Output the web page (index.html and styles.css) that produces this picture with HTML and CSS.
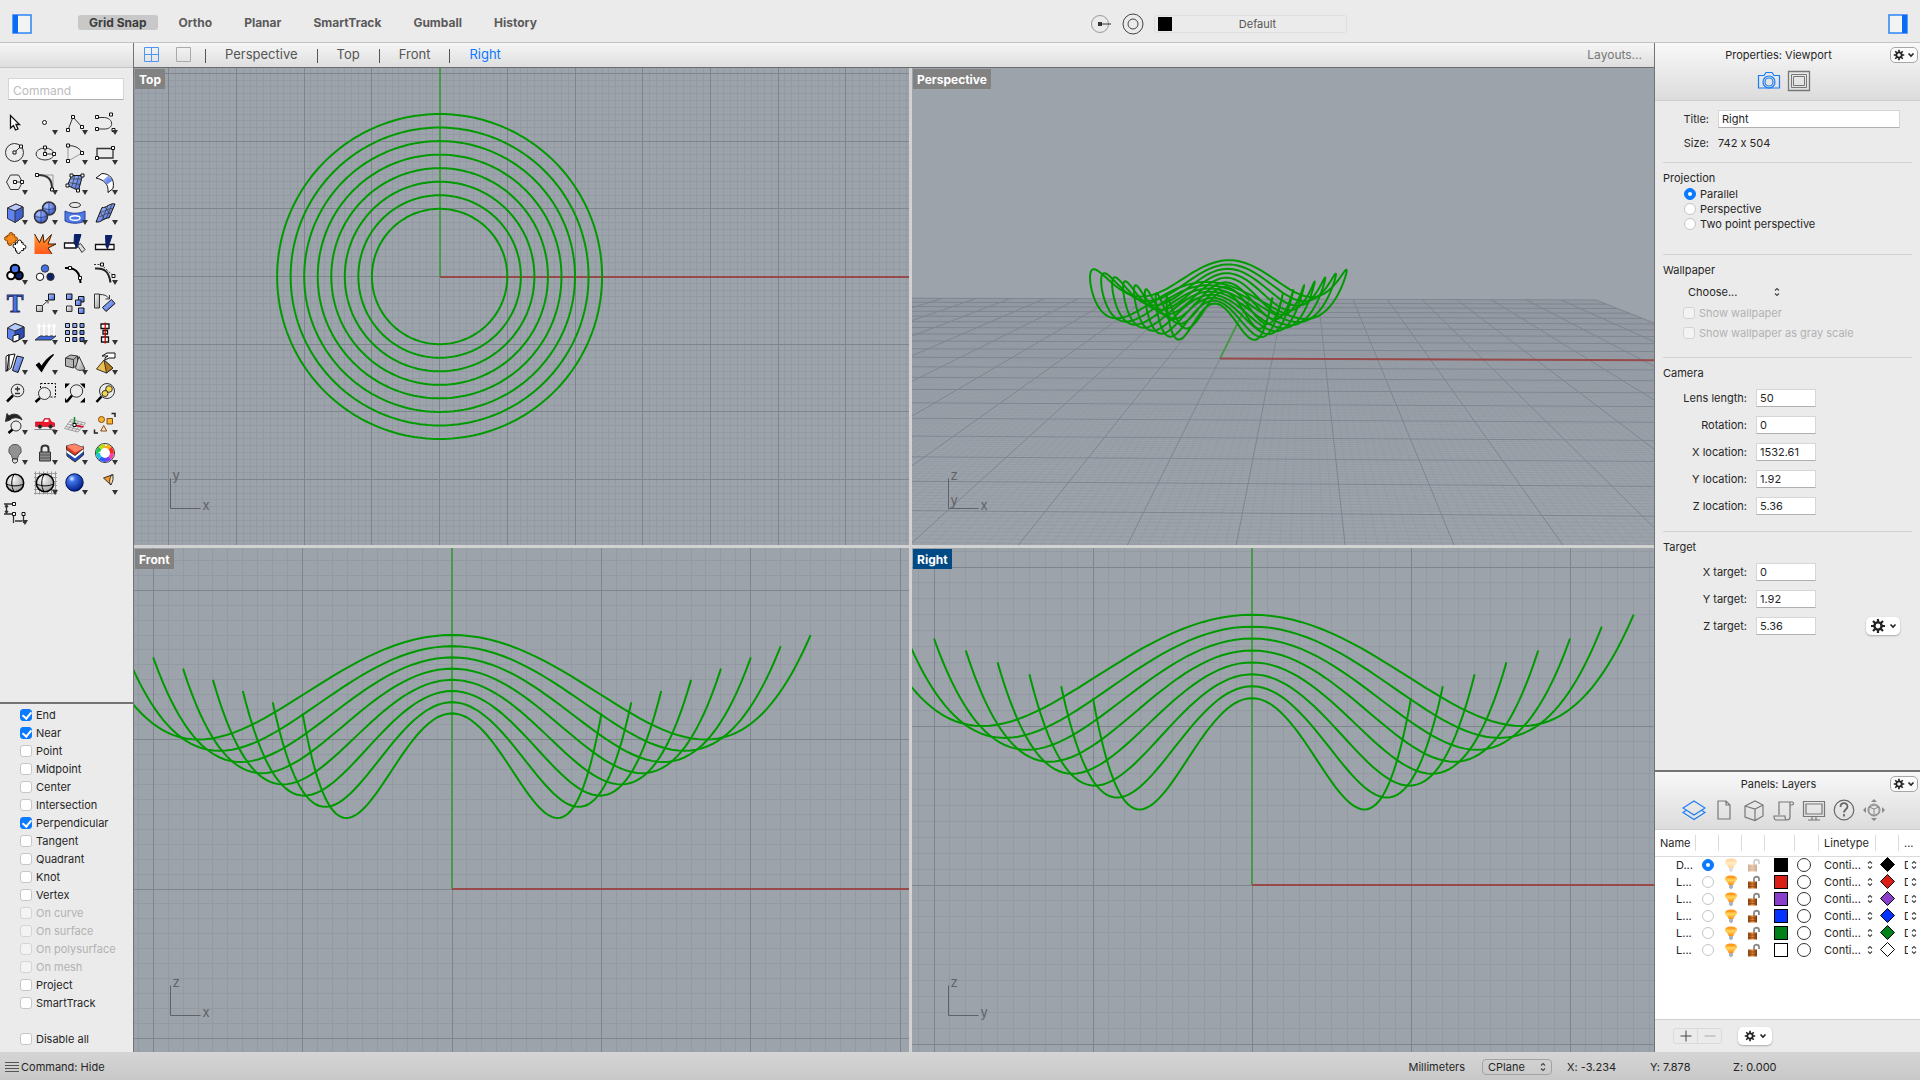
FILE: index.html
```html
<!doctype html>
<html lang="en">
<head>
<meta charset="utf-8">
<title>Rhinoceros</title>
<link rel="stylesheet" href="styles.css">
</head>
<body>

<!-- shared gradients and symbols -->
<svg class="defs" width="0" height="0" aria-hidden="true">
  <defs>
    <linearGradient id="blue" x1="0" y1="0" x2="1" y2="1"><stop offset="0" stop-color="#b4c8ff"/><stop offset="1" stop-color="#3c62d8"/></linearGradient>
    <linearGradient id="grey" x1="0" y1="0" x2="1" y2="1"><stop offset="0" stop-color="#fff"/><stop offset="1" stop-color="#9a9a9a"/></linearGradient>
    <linearGradient id="fire" x1="0" y1="0" x2="0" y2="1"><stop offset="0" stop-color="#ff9a2e"/><stop offset="1" stop-color="#ff5a1c"/></linearGradient>
    <linearGradient id="glow" x1="0" y1="0" x2="0" y2="1"><stop offset="0" stop-color="#ff8a0c"/><stop offset=".5" stop-color="#ffd65c"/><stop offset="1" stop-color="#ff8c12"/></linearGradient>
    <linearGradient id="brass" x1="0" y1="0" x2="1" y2="0"><stop offset="0" stop-color="#8a3f10"/><stop offset=".5" stop-color="#e0862f"/><stop offset="1" stop-color="#7a340c"/></linearGradient>
    <radialGradient id="ball" cx=".35" cy=".3" r=".7"><stop offset="0" stop-color="#fff"/><stop offset="1" stop-color="#a4a4a4"/></radialGradient>
    <radialGradient id="marble" cx=".35" cy=".28" r=".75"><stop offset="0" stop-color="#e6f0ff"/><stop offset=".25" stop-color="#3f74e8"/><stop offset="1" stop-color="#001a84"/></radialGradient>
    <radialGradient id="orb" cx=".35" cy=".3" r=".8"><stop offset="0" stop-color="#a9c0ff"/><stop offset="1" stop-color="#2d52c4"/></radialGradient>
  </defs>
  <symbol id="gear" viewBox="0 0 16 16">
    <circle cx="8" cy="8" r="3.6" fill="none" stroke="#222" stroke-width="2.4"/>
    <path d="M8 1v3M8 12v3M1 8h3M12 8h3M3 3l2 2M11 11l2 2M13 3l-2 2M3 13l2-2" stroke="#222" stroke-width="2.2" fill="none"/>
  </symbol>
  <symbol id="chev" viewBox="0 0 8 8"><path d="M1.500 2.500L4 5l2.500-2.500" fill="none" stroke="#222" stroke-width="1.600"/></symbol>
  <symbol id="updown" viewBox="0 0 6 10"><path d="M1 3.500L3 1.500l2 2M1 6.500l2 2 2-2" fill="none" stroke="#444" stroke-width="1.100"/></symbol>
  <symbol id="bulb" viewBox="0 0 14 16">
    <path d="M7 1.500c4 0 6 1.500 6 3.500 0 2.500-3.500 3-3.500 6h-5c0-3-3.500-3.500-3.500-6C1 3 3 1.500 7 1.500z" fill="url(#glow)"/>
    <path d="M3 3.500h8" stroke="#ff9b20"/><path d="M5 11h4v2.500L7 15.500 5 13.500z" fill="#a9b2bf"/>
  </symbol>
  <symbol id="lock" viewBox="0 0 14 16">
    <path d="M7 8V5c0-3 5-3 5 0v2" fill="none" stroke="#8a8a8a" stroke-width="1.800"/>
    <rect x="1" y="7.500" width="9" height="7" fill="url(#brass)"/><path d="M1 10h9M1 12.500h9" stroke="#7b3a12" stroke-width=".6"/>
  </symbol>
</svg>

<div class="app">

<header class="topbar">
  <button class="side-toggle" aria-label="Left sidebar"><svg width="20" height="24" viewBox="0 0 20 24"><rect x="1" y="3" width="18" height="18" fill="#f3f3f3" stroke="#2b84f5" stroke-width="1.500"/><path d="M1 3h5v18H1z" fill="#0a6cf5"/></svg></button>
  <nav class="modes">
    <button class="on">Grid Snap</button><button>Ortho</button><button>Planar</button><button>SmartTrack</button><button>Gumball</button><button>History</button>
  </nav>
  <div class="current">
    <button class="round" aria-label="Record history"><svg width="22" height="22" viewBox="0 0 22 22"><circle cx="10" cy="11" r="8.500" fill="none" stroke="#999"/><path d="M8 9h4v4H8z" fill="#333"/><path d="M11 11h10" stroke="#333"/></svg></button>
    <button class="round" aria-label="Filter"><svg width="22" height="22" viewBox="0 0 22 22"><circle cx="11" cy="11" r="10" fill="none" stroke="#444"/><circle cx="11" cy="11" r="5" fill="none" stroke="#444"/></svg></button>
    <button class="layer-pick"><i></i><span>Default</span></button>
  </div>
  <button class="side-toggle" aria-label="Right sidebar"><svg width="20" height="24" viewBox="0 0 20 24"><rect x="1" y="3" width="18" height="18" fill="#f3f3f3" stroke="#2b84f5" stroke-width="1.500"/><path d="M14 3h5v18h-5z" fill="#0a6cf5"/></svg></button>
</header>

<aside class="left">
  <div class="strip"></div>
  <div class="command"><input type="text" placeholder="Command" aria-label="Command"></div>

  <div class="tools">
    <button class="tool" aria-label="Select"><svg viewBox="0 0 30 30"><path class="w" d="M10.500 8.500v12.500l3-2.500 2 4.500 2.500-1-2-4.500h3.500z" stroke-width="1.300"/></svg></button>
    <button class="tool menu" aria-label="Point"><svg viewBox="0 0 30 30"><circle class="w" cx="14.500" cy="15.500" r="2"/></svg></button>
    <button class="tool menu" aria-label="Polyline"><svg viewBox="0 0 30 30"><path d="M8 23l5-13 9 10"/><path class="n" d="M6.500 21.500h3v3h-3zM11.500 8.500h3v3h-3zM20.500 18.500h3v3h-3z"/></svg></button>
    <button class="tool menu" aria-label="Curve"><svg viewBox="0 0 30 30"><path d="M8 10.500h4c12-1 13 12 2 11.500H8"/><path class="n" d="M5.500 8.500h3v3h-3zM19.500 6h3v3h-3zM5.500 20.500h3v3h-3zM22 21.500h3v3h-3z"/></svg></button>

    <button class="tool menu" aria-label="Circle"><svg viewBox="0 0 30 30"><circle cx="14.500" cy="15.500" r="9"/><path d="M14.500 15.500l6-6"/><path class="n" d="M13 14h3v3h-3zM19.500 8h3v3h-3z"/></svg></button>
    <button class="tool menu" aria-label="Ellipse"><svg viewBox="0 0 30 30"><ellipse cx="15" cy="17" rx="9" ry="6"/><path d="M15 17V10M15 17h9"/><path class="n" d="M13.500 15.500h3v3h-3zM13.500 9h3v3h-3zM22.500 15.500h3v3h-3z"/></svg></button>
    <button class="tool menu" aria-label="Arc"><svg viewBox="0 0 30 30"><path d="M8 24V8M8 24l14-8" stroke="#999"/><path d="M8 8.500q11 0 14 7.500"/><path class="n" d="M6.500 7h3v3h-3zM6.500 22.500h3v3h-3zM20.500 14.500h3v3h-3z"/></svg></button>
    <button class="tool menu" aria-label="Rectangle"><svg viewBox="0 0 30 30"><path d="M7 11.500h16v9.500H7z" stroke-width="1.300"/><path class="n" d="M5.500 19.500h3v3h-3zM21.500 9.500h3v3h-3z"/></svg></button>

    <button class="tool menu" aria-label="Polygon"><svg viewBox="0 0 30 30"><path d="M10.500 8h8l4 7-4 7.500h-8l-4-7.500z"/><path d="M15 15h7"/><path class="n" d="M13.500 13.500h3v3h-3zM20.500 13.500h3v3h-3z"/></svg></button>
    <button class="tool menu" aria-label="Fillet"><svg viewBox="0 0 30 30"><path d="M8 8h15v15" stroke="#999"/><path d="M8 8c10 0 14 4 14 14" stroke-width="2"/><path class="n" d="M5.500 6.500h3v3h-3zM20.500 21h3v3h-3z"/></svg></button>
    <button class="tool menu" aria-label="Surface from points"><svg viewBox="0 0 30 30"><path class="b" d="M11.500 8.500h11l-4 15-11-5z"/><path d="M15 8.500l-3.500 12M19 8.500l-4 13.500M10 12h11.500M9 15.500l11 2" stroke-width=".7"/><path class="n" d="M10 7h3v3h-3zM21 7h3v3h-3zM6 17h3v3H6zM16.500 22h3v3h-3z"/></svg></button>
    <button class="tool menu" aria-label="Sweep"><svg viewBox="0 0 30 30"><path class="w" d="M6 11l6-4.500c8 0 13 6 11 15l-5 4c1-9-5-13-12-14.500z"/><path fill="url(#blue)" d="M13 13l5.500-4.500 4 5-5.500 4z" stroke="none"/></svg></button>

    <button class="tool menu" aria-label="Box"><svg viewBox="0 0 30 30"><path d="M7.500 11L16 7l7 3v10l-8 5.500-7.500-4z" fill="#5f84f2"/><path d="M7.500 11L16 7l7 3-8 4z" fill="#b9caff"/><path d="M15 14v11.500l8-5.500V10z" fill="#3f62cf"/></svg></button>
    <button class="tool menu" aria-label="Boolean union"><svg viewBox="0 0 30 30"><circle cx="19" cy="11.500" r="6.500" fill="url(#orb)" stroke-width="1.500"/><circle cx="11" cy="19.500" r="6.500" fill="url(#orb)" stroke-width="1.500"/><path d="M11 13v13M5 19c4 2 8 2 12 0M19 5v13M13 11c4 2 8 2 12 0" stroke="#1e2f70" stroke-width=".7"/></svg></button>
    <button class="tool menu" aria-label="Project"><svg viewBox="0 0 30 30"><ellipse cx="15" cy="8" rx="5.500" ry="2.500"/><path d="M5 14c6 3 14 3 20 0v10c-6 3-14 3-20 0z" fill="#4f78e6" stroke="#28439a"/><ellipse cx="15" cy="21" rx="5" ry="2.300" stroke="#fff" stroke-width="1.500"/></svg></button>
    <button class="tool menu" aria-label="Mesh"><svg viewBox="0 0 30 30"><path class="b" d="M12 10.500c4 1 8-5 13-3.500l-6 14c-4-1-8 5-13 4z"/><path d="M18 8.500l-6 14.500M22 7l-6 15M10 15c4 1 8-5 13-3M8 19.500c4 1 8-5 13-3M10 15l5 8M15 10l6 8" stroke-width=".7"/></svg></button>

    <button class="tool" aria-label="Join"><svg viewBox="0 0 30 30"><g fill="#f58a1f" stroke="#8a4300"><circle cx="11" cy="7.500" r="2"/><circle cx="6.500" cy="11.500" r="2"/><circle cx="15.500" cy="12" r="2"/><circle cx="10" cy="16.500" r="2"/><path d="M7 8.500l7.500-1 1 8-8 1z"/></g><path d="M9.500 7.500h3v9h-4zM6.500 10.500h9v3h-9z" fill="#f58a1f" stroke="none"/><g class="w"><circle cx="19.500" cy="15" r="2"/><circle cx="15" cy="19" r="2"/><circle cx="24" cy="20" r="2"/><circle cx="18.500" cy="24.500" r="2"/><path d="M15.500 16l7.500-.500.500 8-8 .500z"/></g><path d="M18 15h3v9.500h-4zM15 18h9v3h-9z" fill="#fff" stroke="none"/></svg></button>
    <button class="tool" aria-label="Explode"><svg viewBox="0 0 30 30"><path d="M4.500 27V7l5 8.500L13 7.500l1 8 7.500-8-3.500 9.500h8l-8 4 4 6z" fill="url(#fire)" stroke="none"/><path d="M4.500 7l5 8.500L13 7.500l1 8 7.500-8-3.500 9.500h8l-8 4 4 6" stroke="#3a1800"/></svg></button>
    <button class="tool" aria-label="Trim"><svg viewBox="0 0 30 30"><path class="w" d="M4.500 16H16v5H4.500z" stroke-width="1.300"/><path d="M17.500 18.500l3-2 4.500 6-3 3z" fill="#ddd"/><path d="M14.500 7.500H21L17 21l-3-5z" fill="#0c2266" stroke="#0c2266"/></svg></button>
    <button class="tool" aria-label="Split"><svg viewBox="0 0 30 30"><path class="w" d="M5.500 17.500H24v5H5.500z" stroke-width="1.300"/><path d="M15.500 8.500H22L17.500 22l-1.500-3z" fill="#0c2266" stroke="#0c2266"/></svg></button>

    <button class="tool menu" aria-label="Group"><svg viewBox="0 0 30 30"><g stroke="#000" stroke-width="2"><circle cx="11" cy="18.500" r="3.800" fill="#fff"/><circle cx="19" cy="18.500" r="3.800" fill="#0c2266"/><circle cx="15" cy="12" r="4.300" fill="#4570e6"/></g></svg></button>
    <button class="tool" aria-label="Ungroup"><svg viewBox="0 0 30 30"><circle cx="15" cy="11.500" r="3.700" fill="#4570e6"/><circle class="w" cx="10" cy="19.800" r="3.700"/><circle cx="20.500" cy="19.800" r="3.700" fill="#0c2266"/></svg></button>
    <button class="tool" aria-label="Edit points"><svg viewBox="0 0 30 30"><path d="M5 11c10-1 15 4 15.500 15" stroke-width="2" stroke="#000"/><path class="n" d="M8.500 9.500h3v3h-3zM18.500 19.500h3v3h-3z"/></svg></button>
    <button class="tool menu" aria-label="Control points"><svg viewBox="0 0 30 30"><path d="M5 11.500c10-1 14 4 15.500 14" stroke-width="2" stroke="#222"/><path d="M4 7.500h7l12 11" stroke-dasharray="2 1.500"/><path class="n" d="M10.500 6h3v3h-3zM22 17.500h3v3h-3z"/></svg></button>

    <button class="tool" aria-label="Text"><svg viewBox="0 0 30 30"><text x="15" y="24.500" text-anchor="middle" font-family="Liberation Serif, serif" font-weight="700" font-size="25" fill="#4a74e0" stroke="#1c2f6c" stroke-width=".9">T</text></svg></button>
    <button class="tool menu" aria-label="Move"><svg viewBox="0 0 30 30"><path d="M6.500 18.500h6v6h-6z" fill="url(#grey)"/><path class="b" d="M18.500 7h6v6h-6z"/><path d="M13 18l4.500-4M15 13.500h3v3"/></svg></button>
    <button class="tool" aria-label="Copy"><svg viewBox="0 0 30 30"><path class="b" d="M6.500 7h5.500v5.500H6.500z"/><path class="b" d="M18.500 9.500H24V15h-5.500z"/><path class="b" d="M15.500 13H21v5.500h-5.500z"/><path class="b" d="M18.500 21H24v5.500h-5.500z"/><path d="M6.500 19H12v5.500H6.500z" fill="url(#grey)"/></svg></button>
    <button class="tool" aria-label="Rotate"><svg viewBox="0 0 30 30"><path d="M4.500 7H9.500v14h-5z" fill="url(#grey)"/><path class="b" d="M12.500 20.500l9-8 3.500 4-9 8z"/><path d="M10 7.500c4 0 7 1 9 4M19.500 8v4h-4"/></svg></button>

    <button class="tool menu" aria-label="Extract surface"><svg viewBox="0 0 30 30"><path d="M7.500 11L15 6.500l9 3.500v10l-9 5-7.500-4z" fill="#5f84f2"/><path d="M7.500 11L15 6.500l9 3.500-9 4z" fill="#b9caff"/><path d="M15 14v11l9-5V10z" fill="#2b4cb8"/><path class="w" d="M13 19l6-2v6l-6 2z"/></svg></button>
    <button class="tool menu" aria-label="Extrude"><svg viewBox="0 0 30 30"><path d="M5 23l5-4h16l-5 4z" fill="#3a67dc"/><path d="M9 19V8M14 19V8M19 19V8M24 19V8M7.500 10L9 7.500l1.500 2.500M12.500 10L14 7.500l1.500 2.500M17.500 10L19 7.500l1.500 2.500M22.500 10L24 7.500l1.500 2.500" stroke="#fff" stroke-width="1.500"/></svg></button>
    <button class="tool menu" aria-label="Array"><svg viewBox="0 0 30 30"><path class="b" d="M5.500 6.500h4v4h-4zM12.800 6.500h4v4h-4zM20 6.500h4v4h-4zM5.500 13.500h4v4h-4zM12.800 13.500h4v4h-4zM20 13.500h4v4h-4zM12.800 20.500h4v4h-4zM20 20.500h4v4h-4z"/><path class="w" d="M5.500 20.500h4v4h-4z"/></svg></button>
    <button class="tool menu" aria-label="Align"><svg viewBox="0 0 30 30"><path class="w" d="M11 7h8v4.500h-8zM13 13.500h4.500V17H13zM11.500 20h7v5h-7z" stroke-width="1.300"/><path d="M15.200 5.500v21" stroke="#d40000" stroke-width="1.300"/></svg></button>

    <button class="tool menu" aria-label="Dimension"><svg viewBox="0 0 30 30"><path class="w" d="M6 9.500l3-2v13l-3 4zM9 8l6-1-4 14-4 3z"/><path class="b" d="M17 9l6.500 1.500L18 25.500l-5.500-2z"/></svg></button>
    <button class="tool menu" aria-label="Check"><svg viewBox="0 0 30 30"><path d="M6.500 18l2.500-2 2.500 3.500C15 14 19 10 23.500 7.500 19 12 15 18 11.500 24.500z" fill="#000" stroke="#000" stroke-width="1.200"/></svg></button>
    <button class="tool menu" aria-label="Solids"><svg viewBox="0 0 30 30"><path d="M5.500 11l5-3 7 1v8l-4 4-8-2z" fill="#b5b5b5"/><path d="M5.500 11l8 1.500v8.500M13.500 12.500l4-3.500" /><path d="M19 9.500L25 22c-2 2-8 2-9.500-1z" fill="url(#grey)"/></svg></button>
    <button class="tool menu" aria-label="Visibility"><svg viewBox="0 0 30 30"><path d="M14 13L6.500 22l10 4 6.500-5z" fill="#efc04e"/><path d="M14 13l2.500 13 6.500-5z" fill="#b97c1c"/><path class="w" d="M12 9l5-3h8v5h-6l-4 2v-2l3-2z"/></svg></button>

    <button class="tool" aria-label="Zoom dynamic"><svg viewBox="0 0 30 30"><circle cx="17.500" cy="13.500" r="6.300"/><path d="M17.500 9.500v5M15 12h5M15 16.500h5" stroke-width="1.300"/><path d="M13 18.500L7 24.500" stroke-width="2.500" stroke="#000"/></svg></button>
    <button class="tool" aria-label="Zoom window"><svg viewBox="0 0 30 30"><path d="M10.500 6.500h15v13.500h-15z" stroke-dasharray="2 1.500" stroke="#000"/><circle cx="14.500" cy="16.500" r="6" fill="#ececec"/><path d="M10 21l-4.500 4" stroke-width="2.500" stroke="#000"/></svg></button>
    <button class="tool" aria-label="Zoom extents"><svg viewBox="0 0 30 30"><path d="M5 6.500h5l-5 5zM25 6.500h-5l5 5zM25 25.500h-5l5-5zM5 25.500h3l-3-5z" fill="#000" stroke="none"/><circle cx="16.500" cy="14" r="6.200"/><path d="M12 18.500l-5 6" stroke-width="2.500" stroke="#000"/></svg></button>
    <button class="tool" aria-label="Zoom selected"><svg viewBox="0 0 30 30"><circle cx="17" cy="14" r="7.500"/><circle cx="19" cy="12" r="3.300" fill="#f6d94b"/><circle cx="15" cy="16.500" r="3" fill="#f6d94b"/><path d="M11.500 19.500L6.500 25" stroke-width="2.500" stroke="#000"/></svg></button>

    <button class="tool menu" aria-label="Undo view"><svg viewBox="0 0 30 30"><path d="M10 13c3-3 8-3 12 0-1-5-8-8-13-4L7 6.500 5.500 14.500z" fill="#222"/><circle cx="16" cy="19" r="5"/><path d="M12.500 22.500L8.500 26" stroke-width="2.500" stroke="#000"/></svg></button>
    <button class="tool menu" aria-label="Set view"><svg viewBox="0 0 30 30"><path d="M4.500 22.500h21" stroke="#888"/><path d="M5.500 15h7l2-3.500h5l2 3.500 3 1v3.500h-19z" fill="#f0182b" stroke="#b00015" stroke-width=".6"/><path d="M15 12.500h3.500V15H14z" fill="#fff" stroke="none"/><circle cx="10" cy="19.500" r="1.700" fill="#222"/><circle cx="20.500" cy="19.500" r="1.700" fill="#222"/></svg></button>
    <button class="tool menu" aria-label="CPlane"><svg viewBox="0 0 30 30"><path d="M4.500 21.500l6.500-9 14.500 3.500-7.500 9zM9.500 14.500l14 3.500M7.500 17l14 3.500M6 19.500l14 3.500M8 22.500l6.500-9M11.500 23.500l7-9M15 24.500l7-9" stroke="#8c8c8c" stroke-width=".8"/><path d="M14.500 18V10" stroke="#0a8a28" stroke-width="1.500"/><path d="M14.500 18l9 2" stroke="#e00020" stroke-width="1.500"/><path class="n" d="M13 16.500h3v3h-3z"/></svg></button>
    <button class="tool menu" aria-label="Select objects"><svg viewBox="0 0 30 30"><g fill="#f5b62e" stroke="#8a4a10"><circle cx="11.500" cy="12.500" r="3"/><path d="M17 11.500h5.500V17H17z"/><path d="M13.700 18.500l3 5.500h-6z" fill="#fbe3d2"/></g><path d="M21.500 6.500h3.500v3.500M4.500 22.500V26H8" stroke="#222" stroke-width="1.500"/></svg></button>

    <button class="tool menu" aria-label="Hide"><svg viewBox="0 0 30 30"><path d="M15 7.500a6 6 0 0 1 3.500 11l-1 3h-5l-1-3A6 6 0 0 1 15 7.500z" fill="#929292" stroke="#555"/><path d="M12.500 22h5v2.500l-1.500 1.500h-2l-1.500-1.500z" fill="#ddd"/></svg></button>
    <button class="tool menu" aria-label="Lock"><svg viewBox="0 0 30 30"><path d="M11.500 15v-3.500c0-4 7-4 7 0V15" stroke-width="2"/><path d="M9.500 15h11v9h-11z" fill="#8a8a8a"/><path d="M10 18h10M10 21h10" stroke="#555"/></svg></button>
    <button class="tool menu" aria-label="Layers"><svg viewBox="0 0 30 30"><path d="M6.500 9l8.500 7 8.500-7v9L15 25l-8-6z" fill="#1c48b8"/><path d="M6.500 9l8.500 7 8.500-7v5.500L15 21.500l-8.500-6z" fill="#fff" stroke="none"/><path d="M6.500 9l8-2 9.500 4-9 7.500-8.500-6z" fill="#e8351f"/><path d="M6.500 9l8-2 9.500 4-9 4.500z" fill="#ff8468" stroke="none"/></svg></button>
    <button class="tool menu" aria-label="Colour"><svg viewBox="0 0 30 30"><circle cx="15" cy="16" r="9.500" fill="#fff" stroke="#333"/><g fill="none" stroke-width="4"><circle cx="15" cy="16" r="7" pathLength="8" stroke-dasharray="1 7" stroke="#ff3ca0"/><circle cx="15" cy="16" r="7" pathLength="8" stroke-dasharray="1 7" stroke-dashoffset="-1" stroke="#7b3cff"/><circle cx="15" cy="16" r="7" pathLength="8" stroke-dasharray="1 7" stroke-dashoffset="-2" stroke="#2060ff"/><circle cx="15" cy="16" r="7" pathLength="8" stroke-dasharray="1 7" stroke-dashoffset="-3" stroke="#12c8e0"/><circle cx="15" cy="16" r="7" pathLength="8" stroke-dasharray="1 7" stroke-dashoffset="-4" stroke="#18c850"/><circle cx="15" cy="16" r="7" pathLength="8" stroke-dasharray="1 7" stroke-dashoffset="-5" stroke="#b4e010"/><circle cx="15" cy="16" r="7" pathLength="8" stroke-dasharray="1 7" stroke-dashoffset="-6" stroke="#ffb010"/><circle cx="15" cy="16" r="7" pathLength="8" stroke-dasharray="1 7" stroke-dashoffset="-7" stroke="#f03020"/></g></svg></button>

    <button class="tool" aria-label="Shade"><svg viewBox="0 0 30 30"><circle cx="15" cy="16" r="8.700" fill="url(#ball)" stroke="#000" stroke-width="1.500"/><path d="M14 7.500c-3 5-3 12 0 17M6.500 17c5 2.500 12 2.500 17 0" stroke="#000"/></svg></button>
    <button class="tool menu" aria-label="Shaded viewport"><svg viewBox="0 0 30 30"><path d="M5.500 4.500v23M9.500 4.500v23M13.500 4.500v23M17.500 4.500v23M21.500 4.500v23M25.500 4.500v23M4 6.500h23M4 10.500h23M4 14.500h23M4 18.500h23M4 22.500h23M4 26.500h23" stroke="#999"/><circle cx="15" cy="16" r="8.700" fill="url(#ball)" stroke="#000" stroke-width="1.500"/><path d="M14 7.500c-3 5-3 12 0 17M6.500 17c5 2.500 12 2.500 17 0" stroke="#000"/></svg></button>
    <button class="tool menu" aria-label="Render"><svg viewBox="0 0 30 30"><circle cx="14.500" cy="15.500" r="8.700" fill="url(#marble)" stroke="#001058"/></svg></button>
    <button class="tool menu" aria-label="Spotlight"><svg viewBox="0 0 30 30"><path d="M13.500 11L23 7.500l-2 10.500z" fill="#f79a2b"/><path d="M22 7.500c2 2 1 8-1.500 10.500-1.500-3-1-7 1.500-10.500z" fill="#ffe2b0"/></svg></button>

    <button class="tool menu" aria-label="Dimensions"><svg viewBox="0 0 30 30"><path d="M4 7h8M4 17h8M6.500 8.500v7M5 10l1.500-2L8 10M5 14l1.500 2L8 14M13.500 19v7M23.500 19v7M15 24h7" stroke-width="1.300"/><path class="n" d="M12.500 5.500h3v3h-3zM12.500 15.500h3v3h-3zM22 15.500h3v3h-3z"/></svg></button>
  </div>

  <div class="osnaps">
    <label><input type="checkbox" checked>End</label>
    <label><input type="checkbox" checked>Near</label>
    <label><input type="checkbox">Point</label>
    <label><input type="checkbox">Midpoint</label>
    <label><input type="checkbox">Center</label>
    <label><input type="checkbox">Intersection</label>
    <label><input type="checkbox" checked>Perpendicular</label>
    <label><input type="checkbox">Tangent</label>
    <label><input type="checkbox">Quadrant</label>
    <label><input type="checkbox">Knot</label>
    <label><input type="checkbox">Vertex</label>
    <label class="off"><input type="checkbox" disabled>On curve</label>
    <label class="off"><input type="checkbox" disabled>On surface</label>
    <label class="off"><input type="checkbox" disabled>On polysurface</label>
    <label class="off"><input type="checkbox" disabled>On mesh</label>
    <label><input type="checkbox">Project</label>
    <label><input type="checkbox">SmartTrack</label>
    <label class="all"><input type="checkbox">Disable all</label>
  </div>
</aside>

<main class="center">
  <nav class="tabs">
    <button class="lay" aria-label="Four views"><svg width="16" height="16" viewBox="0 0 16 16"><path d="M.5.5h14v14H.5zM7.500.5v14M.5 7.500h14" fill="none" stroke="#4c96f5"/></svg></button>
    <button class="lay" aria-label="Single view"><svg width="16" height="16" viewBox="0 0 16 16"><path d="M.5.5h14v14H.5z" fill="none" stroke="#aaa"/></svg></button>
    <a href="#persp">Perspective</a><a href="#top">Top</a><a href="#front">Front</a><a href="#right" class="on">Right</a>
    <button class="layouts">Layouts...</button>
  </nav>
  <div class="views">
    <section class="view" id="top"><h2>Top</h2><svg></svg></section>
    <section class="view" id="persp"><h2>Perspective</h2><svg></svg></section>
    <section class="view" id="front"><h2>Front</h2><svg></svg></section>
    <section class="view active" id="right"><h2>Right</h2><svg></svg></section>
  </div>
</main>

<aside class="right">
  <section class="props">
    <div class="panel-head">
      <h3>Properties: Viewport</h3>
      <button class="gear flat" aria-label="Panel options"><svg width="12" height="12"><use href="#gear"/></svg><svg width="8" height="8"><use href="#chev"/></svg></button>
      <div class="panel-icons">
        <button aria-label="Camera"><svg width="24" height="24" viewBox="0 0 24 24" fill="none" stroke="#1a7cf5" stroke-width="1.200"><path d="M1.500 6.500h5.500l2-3h6l2 3h5.500V19h-21z"/><circle cx="12" cy="13" r="6"/><circle cx="12" cy="13" r="4"/></svg></button>
        <button aria-label="Viewport"><svg width="24" height="24" viewBox="0 0 24 24" fill="none" stroke="#777"><path d="M1.500 2.500h21v19h-21z" stroke-width="1.300"/><path d="M4.500 5.500h15v13h-15zM6.500 7.500h11v9h-11z"/></svg></button>
      </div>
    </div>

    <div class="group title">
      <div class="line"><label for="vt">Title:</label><input type="text" id="vt" value="Right"></div>
      <div class="line"><span class="lbl">Size:</span><span>742 x 504</span></div>
    </div>

    <div class="group projection">
      <h4>Projection</h4>
      <label><input type="radio" name="proj" checked>Parallel</label>
      <label><input type="radio" name="proj">Perspective</label>
      <label><input type="radio" name="proj">Two point perspective</label>
    </div>

    <div class="group wallpaper">
      <h4>Wallpaper</h4>
      <div class="pick"><select aria-label="Wallpaper"><option>Choose...</option></select><svg width="6" height="10"><use href="#updown"/></svg></div>
      <label class="off"><input type="checkbox" disabled>Show wallpaper</label>
      <label class="off"><input type="checkbox" disabled>Show wallpaper as gray scale</label>
    </div>

    <div class="group nums">
      <h4>Camera</h4>
      <div class="line"><label for="c1">Lens length:</label><input type="text" id="c1" value="50"></div>
      <div class="line"><label for="c2">Rotation:</label><input type="text" id="c2" value="0"></div>
      <div class="line"><label for="c3">X location:</label><input type="text" id="c3" value="1532.61"></div>
      <div class="line"><label for="c4">Y location:</label><input type="text" id="c4" value="1.92"></div>
      <div class="line"><label for="c5">Z location:</label><input type="text" id="c5" value="5.36"></div>
    </div>

    <div class="group nums">
      <h4>Target</h4>
      <div class="line"><label for="t1">X target:</label><input type="text" id="t1" value="0"></div>
      <div class="line"><label for="t2">Y target:</label><input type="text" id="t2" value="1.92"></div>
      <div class="line"><label for="t3">Z target:</label><input type="text" id="t3" value="5.36"><button class="gear solid" aria-label="Target options"><svg width="16" height="16"><use href="#gear"/></svg><svg width="8" height="8"><use href="#chev"/></svg></button></div>
    </div>
  </section>

  <section class="layers">
    <div class="panel-head">
      <h3>Panels: Layers</h3>
      <button class="gear flat" aria-label="Panel options"><svg width="12" height="12"><use href="#gear"/></svg><svg width="8" height="8"><use href="#chev"/></svg></button>
      <div class="panel-icons">
        <button aria-label="Layers"><svg width="24" height="24" viewBox="0 0 24 24" fill="none" stroke="#1a7cf5" stroke-width="1.200"><path d="M12 3l11 7-11 7-11-7z"/><path d="M4 12.500l-3 2 11 7 11-7-3-2"/></svg></button>
        <button aria-label="Pages"><svg width="24" height="24" viewBox="0 0 24 24" fill="none" stroke="#777" stroke-width="1.200"><path d="M6 3h8l4 4v14H6zM14 3v4h4"/></svg></button>
        <button aria-label="Blocks"><svg width="24" height="24" viewBox="0 0 24 24" fill="none" stroke="#777" stroke-width="1.200"><path d="M3 8l10-5 8 4v11l-8 4.500L3 19zM3 8l10 3 8-4M13 11v11"/></svg></button>
        <button aria-label="Notes"><svg width="24" height="24" viewBox="0 0 24 24" fill="none" stroke="#777" stroke-width="1.200"><path d="M7 17V4h13c2 0 2 3 0 3h-2v12c0 2-1 3-3 3H4c-2 0-2-4-2-4h11c0 3 1 4 2 4M18 7V4"/></svg></button>
        <button aria-label="Display"><svg width="24" height="24" viewBox="0 0 24 24" fill="none" stroke="#777" stroke-width="1.200"><path d="M1.500 3.500h21v15h-21zM4 6h16v10H4zM10 18.500v3M14 18.500v3M6 22h12"/></svg></button>
        <button aria-label="Help"><svg width="24" height="24" viewBox="0 0 24 24" fill="none" stroke="#666" stroke-width="1.200"><circle cx="12" cy="12" r="9.800"/><path d="M8.500 9c0-5 7-5 7-.5 0 3-3.500 3-3.500 6M12 16v2.500" stroke-width="1.800"/></svg></button>
        <button aria-label="Rotate"><svg width="24" height="24" viewBox="0 0 24 24" fill="none" stroke="#888"><path d="M7 9l5-2 5 2v6l-5 2.500L7 15zM7 9l5 2 5-2M12 11v6.500"/><circle cx="12" cy="12" r="6"/><path d="M12 1l3 3H9zM12 23l3-3H9zM1 12l3-3v6zM23 12l-3-3v6z" fill="#888" stroke="none"/></svg></button>
      </div>
    </div>

    <div class="table-wrap">
      <table>
        <colgroup><col class="c-name"><col class="c-s"><col class="c-s"><col class="c-s"><col class="c-col"><col class="c-mat"><col class="c-line"><col class="c-s"><col class="c-end"></colgroup>
        <thead><tr><th>Name</th><th></th><th></th><th></th><th></th><th></th><th>Linetype</th><th></th><th>...</th></tr></thead>
        <tbody id="layer-rows"></tbody>
      </table>
    </div>

    <div class="layer-foot">
      <div class="pm"><button aria-label="Add"><svg width="12" height="12" viewBox="0 0 12 12"><path d="M6 .5v11M.5 6h11" stroke="#444"/></svg></button><button aria-label="Remove"><svg width="12" height="12" viewBox="0 0 12 12"><path d="M.5 6h11" stroke="#aaa"/></svg></button></div>
      <button class="gear solid" aria-label="Layer options"><svg width="12" height="12"><use href="#gear"/></svg><svg width="8" height="8"><use href="#chev"/></svg></button>
    </div>
  </section>
</aside>

<footer class="status">
  <svg width="14" height="12" viewBox="0 0 14 12"><path d="M0 1.500h14M0 4.500h14M0 7.500h14M0 10.500h14" stroke="#555"/></svg>
  <span class="cmd">Command: Hide</span>
  <span class="units">Millimeters</span>
  <div class="pick cplane"><select aria-label="Coordinates"><option>CPlane</option></select><svg width="6" height="10"><use href="#updown"/></svg></div>
  <span class="xyz">X: -3.234</span><span class="xyz">Y: 7.878</span><span class="xyz">Z: 0.000</span>
</footer>

</div>
<script src="script.js"></script>
</body>
</html>
```

FILE: styles.css
```css
* {
    box-sizing: border-box;
}
body {
    margin: 0;
    font-family: Inter, "Helvetica Neue", "Liberation Sans", sans-serif;
    font-size: 11px;
    line-height: 14px;
    font-feature-settings: "calt" 0;
    color: #262626;
    background: #ebebeb;
}
h2, h3, h4 {
    margin: 0;
    font-size: 11px;
    font-weight: 400;
}
button, input, select {
    margin: 0;
    padding: 0;
    border: 0;
    background: none;
    font: inherit;
    color: inherit;
    appearance: none;
}
svg {
    display: block;
    flex: none;
}
.defs {
    position: absolute;
}

.app {
    display: grid;
    grid-template-columns: 134px minmax(0, 1fr) 266px;
    grid-template-rows: 43px minmax(0, 1fr) 28px;
    height: 100vh;
    min-height: 1020px;
}

/* top bar */
.topbar {
    grid-column: 1 / -1;
    display: flex;
    align-items: center;
    padding: 5px 12px 0;
    background: #ebebeb;
    border-bottom: 1px solid #c4c4c4;
}
.modes {
    display: flex;
    gap: 10px;
    margin: 0 auto 2px 46px;
}
.modes button {
    height: 15px;
    padding: 0 11px;
    border-radius: 3px;
    font-size: 12px;
    font-weight: 700;
    color: #5a5a5a;
}
.modes .on {
    background: #c8c8c8;
    color: #3c3c3c;
}
.current {
    display: flex;
    align-items: center;
    gap: 10px;
    margin-right: 541px;
}
.layer-pick {
    display: flex;
    align-items: center;
    width: 193px;
    height: 18px;
    padding: 0 3px;
    border: 1px solid #dedede;
    border-radius: 3px;
    color: #555;
}
.layer-pick i {
    width: 14px;
    height: 14px;
    background: #000;
}
.layer-pick span {
    flex: 1;
    text-align: center;
}

/* left side */
.left {
    display: flex;
    flex-direction: column;
    border-right: 1px solid #737373;
    background: #ebebeb;
}
.strip {
    height: 25px;
    border-bottom: 1px solid #c4c4c4;
    background: linear-gradient(#f6f6f6, #dedede);
}
.command {
    padding: 10px 9px 7px 8px;
}
.command input {
    width: 100%;
    height: 22px;
    padding: 2px 4px 0;
    font-size: 12px;
}
.command input::placeholder {
    color: #bcbcbc;
}
input[type=text] {
    background: #fff;
    border: 1px solid #d6d6d6;
    border-bottom-color: #b0b0b0;
}
.tools {
    flex: 1;
    display: grid;
    grid-template-columns: repeat(4, 30px);
    grid-auto-rows: 30px;
}
.tool {
    position: relative;
}
.tool svg {
    width: 30px;
    height: 30px;
    fill: none;
    stroke: #333;
    stroke-width: 1;
}
.tool .n {
    fill: #fff;
    stroke: #111;
}
.tool .w {
    fill: #fff;
    stroke: #111;
}
.tool .b {
    fill: url(#blue);
    stroke: #111;
}
.menu::after {
    content: "";
    position: absolute;
    left: 22px;
    top: 23px;
    border: 3px solid transparent;
    border-top: 5px solid #333;
    border-bottom: 0;
}
.osnaps {
    display: flex;
    flex-direction: column;
    padding: 2px 0 4px 20px;
    border-top: 2px solid #737373;
}
label {
    display: flex;
    align-items: center;
    gap: 4px;
}
.osnaps label {
    height: 18px;
}
.osnaps .all {
    margin-top: 18px;
}
.off {
    color: #b2b2b2;
}
input[type=checkbox],
input[type=radio] {
    flex: none;
    width: 12px;
    height: 12px;
    border: 1px solid #c6c6c6;
    border-radius: 3px;
    background: #fff;
}
input[type=radio] {
    border-radius: 50%;
}
input:disabled {
    background: #f3f3f3;
    border-color: #d4d4d4;
}
input[type=checkbox]:checked,
input[type=radio]:checked {
    border-color: #0a7aff;
    background: #0a7aff;
}
input[type=checkbox]:checked::before {
    content: "";
    display: block;
    width: 4px;
    height: 7px;
    margin: 0 3px;
    border: solid #fff;
    border-width: 0 2px 2px 0;
    transform: rotate(40deg);
}
input[type=radio]:checked::before {
    content: "";
    display: block;
    width: 4px;
    height: 4px;
    margin: 3px;
    border-radius: 50%;
    background: #fff;
}

/* viewports */
.center {
    display: flex;
    flex-direction: column;
}
.tabs {
    display: flex;
    align-items: center;
    height: 25px;
    padding: 0 12px 0 10px;
    border-bottom: 1px solid #6c6c6c;
    background: linear-gradient(#f6f6f6, #dedede);
    font-size: 12px;
}
.tabs .lay {
    margin: 0 16px 1px 0;
}
.tabs a {
    display: flex;
    align-items: center;
    margin-right: 19px;
    padding-bottom: 3px;
    font-size: 13px;
    color: #555;
    text-decoration: none;
}
.tabs a::before {
    content: "";
    width: 1px;
    height: 14px;
    margin: 4px 19px 0 0;
    background: #555;
}
.tabs .lay + a {
    margin-left: -3px;
}
.tabs .on {
    color: #0a78ff;
}
.layouts {
    margin-left: auto;
    color: #777;
}
.views {
    flex: 1;
    display: grid;
    grid-template-columns: 775fr 742fr;
    grid-template-rows: 477fr 504fr;
    gap: 3px;
    background: #d2d2d2;
}
.view {
    position: relative;
    min-width: 0;
    min-height: 0;
    overflow: hidden;
    background: #9ca3ab;
}
.view h2 {
    position: absolute;
    left: 1px;
    top: 1px;
    height: 20px;
    padding: 1px 4px 0;
    background: #828282;
    color: #fff;
    font-size: 12px;
    font-weight: 700;
    line-height: 20px;
}
.active h2 {
    background: #004a86;
}
.view svg {
    width: 100%;
    height: 100%;
}
.view path {
    fill: none;
}
.minor { stroke: #939aa3; }
.major { stroke: #7f858f; }
.x-axis { stroke: #984a4a; stroke-width: 2; }
.y-axis { stroke: #4a984a; stroke-width: 2; }
.curve { stroke: #009a00; stroke-width: 2; }
.glyph { stroke: #5f6266; }
.view text {
    fill: #5f6266;
    font-size: 13px;
}

/* right side */
.right {
    display: flex;
    flex-direction: column;
    border-left: 1px solid #737373;
    background: #ebebeb;
}
.panel-head {
    display: grid;
    grid-template-columns: 28px 1fr 28px;
    grid-template-rows: 23px 34px;
    align-items: center;
    justify-items: center;
    height: 58px;
    padding: 0 2px;
    border-bottom: 1px solid #cfcfcf;
    background: linear-gradient(#f8f8f8, #dcdcdc);
}
.panel-head h3 {
    grid-column: 2;
    margin-right: 18px;
}
.panel-icons {
    grid-column: 1 / -1;
    display: flex;
    gap: 6px;
    margin: 0 8px 4px 0;
}
.gear {
    display: flex;
    align-items: center;
    justify-content: center;
    gap: 2px;
}
.flat {
    width: 28px;
    height: 16px;
    border: 1px solid #a6a6a6;
    border-radius: 5px;
    background: #fbfbfb;
}
.solid {
    width: 34px;
    height: 18px;
    border-radius: 5px;
    background: #fff;
    box-shadow: 0 1px 2px #aaa;
    gap: 3px;
}
.props {
    flex: 1;
}
.group {
    margin: 0 8px;
    border-bottom: 1px solid #d2d2d2;
}
.group:last-child {
    border: 0;
}
.line {
    display: flex;
    align-items: center;
    gap: 9px;
}
.line label,
.line .lbl {
    width: 84px;
    justify-content: flex-end;
    text-align: right;
}
.line input {
    width: 60px;
    height: 18px;
    padding: 0 3px;
}
.title {
    padding: 9px 0 12px;
}
.title .line label,
.title .line .lbl {
    width: 46px;
}
.title .line input {
    width: 182px;
}
.title .line + .line {
    margin-top: 8px;
}
.projection {
    padding: 8px 0 23px;
}
.projection h4 {
    margin-bottom: 1px;
}
.projection label {
    height: 15px;
    padding-left: 21px;
}
.wallpaper {
    padding: 8px 0 14px;
}
.wallpaper .pick {
    height: 18px;
    margin: 6px 0 2px 25px;
}
.wallpaper label {
    height: 20px;
    padding-left: 20px;
}
.pick {
    display: flex;
    align-items: center;
}
.wallpaper .pick select {
    width: 86px;
}
.nums {
    padding: 8px 0 12px;
}
.nums h4 {
    margin-bottom: 4px;
}
.nums .line {
    height: 27px;
}
.nums .gear {
    margin-left: auto;
    margin-right: 12px;
}
.layers {
    border-top: 2px solid #737373;
}
.table-wrap {
    height: 190px;
    background: #fff;
    border-bottom: 1px solid #cfcfcf;
}
table {
    width: 100%;
    table-layout: fixed;
    border-collapse: collapse;
}
.c-name { width: 41px; }
.c-s { width: 23px; }
.c-col { width: 30px; }
.c-mat { width: 24px; }
.c-end { width: 21px; }
th {
    height: 26px;
    padding: 0 0 0 5px;
    border-bottom: 1px solid #dcdcdc;
    background: linear-gradient(#dcdcdc, #dcdcdc) right center / 1px 16px no-repeat;
    font-weight: 400;
    text-align: left;
    overflow: hidden;
    white-space: nowrap;
}
th:last-child {
    background: none;
}
td {
    height: 17px;
    padding: 0;
    overflow: hidden;
    white-space: nowrap;
}
td:first-child {
    padding-left: 21px;
}
td > svg,
td > i {
    display: block;
    margin: 0 auto;
}
td input[type=radio] {
    display: block;
    margin: 0 auto;
}
td .swatch {
    width: 14px;
    height: 14px;
    margin-left: 9px;
    border: 1px solid #000;
}
td .mat {
    width: 14px;
    height: 14px;
    margin-left: 2px;
    border: 1px solid #333;
    border-radius: 50%;
}
td .pick {
    gap: 3px;
    padding-left: 5px;
}
td .pick select {
    width: 40px;
}
td .tiny select {
    width: 4px;
}
.dim {
    opacity: .4;
}
.layer-foot {
    display: flex;
    align-items: center;
    gap: 16px;
    height: 32px;
    padding-left: 18px;
}
.pm {
    display: flex;
    width: 49px;
    height: 16px;
    border: 1px solid #dadada;
    border-radius: 3px;
}
.pm button {
    flex: 1;
    display: flex;
    align-items: center;
    justify-content: center;
}
.pm button + button {
    border-left: 1px solid #dadada;
}

/* status bar */
.status {
    grid-column: 1 / -1;
    display: flex;
    align-items: center;
    padding: 2px 5px 0;
    background: linear-gradient(#d5d5d5, #c8c8c8);
}
.cmd {
    margin: 0 auto 0 2px;
}
.cplane {
    width: 70px;
    height: 16px;
    margin: 0 15px 0 17px;
    padding: 0 5px;
    border: 1px solid #a2a2a2;
    border-radius: 4px;
    justify-content: space-between;
}
.xyz {
    width: 83px;
}
.xyz:last-child {
    width: 182px;
}
```

FILE: script.js
```js
var NS = 'http://www.w3.org/2000/svg';

function add(svg, tag, attrs, text) {
  var el = document.createElementNS(NS, tag);
  for (var k in attrs) el.setAttribute(k, attrs[k]);
  if (text) el.textContent = text;
  svg.appendChild(el);
  return el;
}

// the model: eight rings, radius 1.0 to 2.4 grid squares, with a four-fold wave in z
function rings(fn) {
  for (var i = 0; i < 8; i++) fn(1 + i * 0.2, 0.825 + i * 0.075);
}
function wave(r, z, a) {
  return [r * Math.sin(a), r * Math.cos(a), z + 0.35 * Math.cos(4 * a)];
}
function ringPath(r, z, project) {
  var d = '';
  for (var i = 0; i <= 240; i++) {
    var p = wave(r, z, i * Math.PI / 120);
    var q = project(p[0], p[1], p[2]);
    d += (i ? 'L' : 'M') + q[0].toFixed(2) + ' ' + q[1].toFixed(2);
  }
  return d;
}

function axes(svg, h, side, up, inner) {
  var x = 36.5, y = h - 36.5;
  add(svg, 'path', { 'class': 'glyph', d: 'M' + x + ' ' + (y - 30) + 'v30h30' });
  add(svg, 'text', { x: x + 2, y: y - 29 }, up);
  add(svg, 'text', { x: x + 32, y: y + 1 }, side);
  if (inner) add(svg, 'text', { x: x + 2, y: y - 4 }, inner);
}

function drawOrtho(id, ox, oy, unit, side, up, project) {
  var svg = document.querySelector('#' + id + ' svg');
  var w = svg.clientWidth, h = svg.clientHeight;
  svg.textContent = '';
  var minor = '', major = '', i, p;
  for (i = -120; i <= 120; i++) {
    p = Math.floor(ox + i * unit / 10) + 0.5;
    if (p > 0 && p < w) {
      if (i % 10) minor += 'M' + p + ' 0V' + h; else major += 'M' + p + ' 0V' + h;
    }
    p = Math.floor(oy + i * unit / 10) + 0.5;
    if (p > 0 && p < h) {
      if (i % 10) minor += 'M0 ' + p + 'H' + w; else major += 'M0 ' + p + 'H' + w;
    }
  }
  var ax = Math.round(ox), ay = Math.round(oy);
  add(svg, 'path', { 'class': 'minor', d: minor });
  add(svg, 'path', { 'class': 'major', d: major });
  add(svg, 'path', { 'class': 'y-axis', d: 'M' + ax + ' 0V' + ay });
  add(svg, 'path', { 'class': 'x-axis', d: 'M' + ax + ' ' + ay + 'H' + w });
  rings(function (r, z) {
    add(svg, 'path', { 'class': 'curve', d: ringPath(r, z, function (x, y, zz) {
      var q = project(x, y, zz);
      return [ox + q[0] * unit, oy - q[1] * unit];
    }) });
  });
  axes(svg, h, side, up);
}

function drawPersp() {
  var svg = document.querySelector('#persp svg');
  var w = svg.clientWidth, h = svg.clientHeight;
  svg.textContent = '';
  var f = h / 0.48, pitch = 0.1216, yaw = 0.023, eye = 3.277;
  var cp = Math.cos(pitch), sp = Math.sin(pitch), cy = Math.cos(yaw), sy = Math.sin(yaw);
  function project(x, y, z) {
    var r = -1.202 + x * cy + y * sy;
    var fw = 18.71 - x * sy + y * cy;
    var depth = fw * cp + (eye - z) * sp;
    return [w / 2 + f * r / depth, h / 2 + 0.5 + f * ((eye - z) * cp - fw * sp) / depth];
  }
  function seg(x1, y1, x2, y2) {
    var a = project(x1, y1, 0), b = project(x2, y2, 0);
    return 'M' + a[0].toFixed(2) + ' ' + a[1].toFixed(2) + 'L' + b[0].toFixed(2) + ' ' + b[1].toFixed(2);
  }
  var minor = '', major = '';
  for (var i = -100; i <= 100; i++) {
    var s = seg(i / 10, -10, i / 10, 10) + seg(-10, i / 10, 10, i / 10);
    if (i % 10) minor += s; else major += s;
  }
  add(svg, 'path', { 'class': 'minor', 'stroke-opacity': 0.8, d: minor });
  add(svg, 'path', { 'class': 'major', d: major });
  add(svg, 'path', { 'class': 'y-axis', d: seg(0, 0, 0, 10) });
  add(svg, 'path', { 'class': 'x-axis', d: seg(0, 0, 10, 0) });
  rings(function (r, z) {
    add(svg, 'path', { 'class': 'curve', d: ringPath(r, z, project) });
  });
  axes(svg, h, 'x', 'z', 'y');
}

function drawViews() {
  drawOrtho('top', 305.6, 208.5, 67.7, 'x', 'y', function (x, y) { return [x, y]; });
  drawOrtho('front', 318, 341, 149.4, 'x', 'z', function (x, y, z) { return [x, z]; });
  drawOrtho('right', 340, 337, 159, 'y', 'z', function (x, y, z) { return [y, z]; });
  drawPersp();
}

var layers = [
  ['D...', '#000000'], ['L...', '#d91e18'], ['L...', '#8a3fcb'],
  ['L...', '#0433ff'], ['L...', '#008218'], ['L...', '#ffffff']
];
document.getElementById('layer-rows').innerHTML = layers.map(function (l, i) {
  var dim = i ? '' : ' class="dim"';
  return '<tr><td>' + l[0] + '</td>' +
    '<td><input type="radio" name="layer" aria-label="Current layer"' + (i ? '' : ' checked') + '></td>' +
    '<td><svg' + dim + ' width="14" height="16"><use href="#bulb"/></svg></td>' +
    '<td><svg' + dim + ' width="14" height="16"><use href="#lock"/></svg></td>' +
    '<td><i class="swatch" style="background:' + l[1] + '"></i></td>' +
    '<td><i class="mat"></i></td>' +
    '<td><div class="pick"><select aria-label="Linetype"><option>Conti...</option></select><svg width="6" height="10"><use href="#updown"/></svg></div></td>' +
    '<td><svg width="15" height="15" viewBox="0 0 15 15"><path d="M7.5 .5l7 7-7 7-7-7z" stroke="#000" fill="' + l[1] + '"/></svg></td>' +
    '<td><div class="pick tiny"><select aria-label="Print width"><option>Default</option></select><svg width="6" height="10"><use href="#updown"/></svg></div></td></tr>';
}).join('');

drawViews();
window.addEventListener('resize', drawViews);
```
